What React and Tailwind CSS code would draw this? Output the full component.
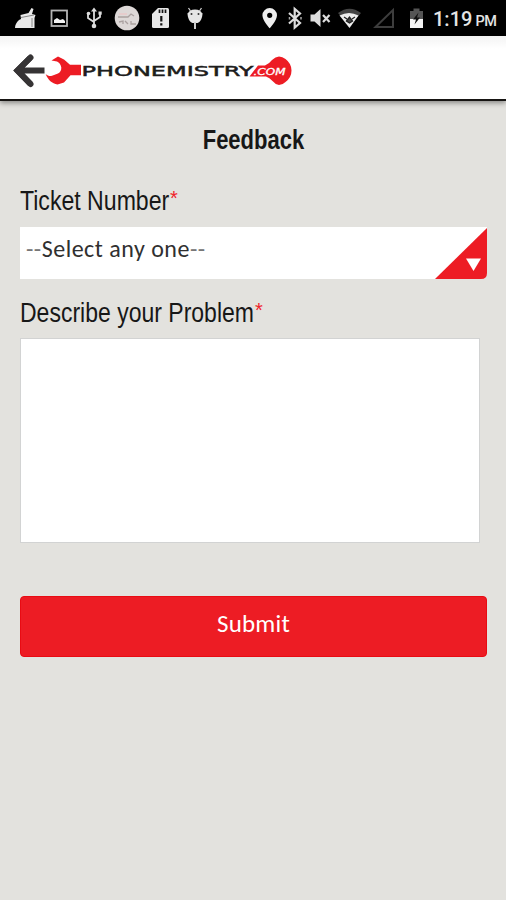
function StatusIcons() {
  return (
    <svg className="block h-[35px] w-[430px] shrink-0" viewBox="0 0 430 35">
      {/* cleaner */}
      <path d="M15 28c0-3 1.500-6 4-8l2-1-.5-4 8-2 3-5 2 1-1.500 5 3.500 1-1 3v10z" fill="#e9e9e9" />
      <path d="M21 17.500l13-2.500M32 18v9" stroke="#888" strokeWidth="1" />
      {/* picture */}
      <rect x="51.500" y="10.500" width="15.500" height="15.500" fill="none" stroke="#b5b5b5" strokeWidth="1.800" />
      <path d="M54 23v-3l3-2 3 2 3-1 2 2v2z" fill="#f2f2f2" />
      {/* usb */}
      <path d="M94 9v17M88 14v4l6 4M100 13v4l-6 4" fill="none" stroke="#ddd" strokeWidth="1.800" />
      <path d="M91 11.500l3-4 3 4z" fill="#ddd" />
      <circle cx="94" cy="26" r="2.300" fill="#ddd" />
      <circle cx="88.500" cy="13.500" r="1.800" fill="#ddd" />
      <rect x="98.500" y="11.500" width="3.200" height="3.200" fill="#ddd" />
      {/* avatar notification */}
      <circle cx="127" cy="18" r="12.300" fill="#ddd8d7" />
      <path d="M118 17h10l3-3 3 2M119 22l4-1v3M125 21l3 3M131 21v3h5" fill="none" stroke="#aaa1a0" strokeWidth="1.300" />
      <path d="M119 14h8" stroke="#e6cccc" strokeWidth="2" />
      {/* sd card */}
      <path d="M158 8h9.500q1.500 0 1.500 1.500v17q0 1.500-1.500 1.500h-14q-1.500 0-1.500-1.500V14z" fill="#e6e6e6" />
      <path d="M159.500 9.500v3.500M162.500 9.500v3.500M165.500 9.500v3.500" stroke="#111" strokeWidth="1.700" />
      <path d="M161.300 16v5.500M161.300 23.300v2.200" stroke="#111" strokeWidth="2.200" />
      {/* android debugging */}
      <path d="M187.500 13h15c0 5-2 9-5 10h-5c-3-1-5-5-5-10z" fill="#e6e6e6" />
      <ellipse cx="195" cy="14" rx="7" ry="4.500" fill="#e6e6e6" />
      <path d="M190.500 11l-2-3M199.500 11l2-3" stroke="#ccc" strokeWidth="1.300" />
      <path d="M195 22v7" stroke="#ccc" strokeWidth="2" />
      <circle cx="191.500" cy="14" r="1" fill="#333" />
      <circle cx="198.500" cy="14" r="1" fill="#333" />
      {/* location */}
      <path fillRule="evenodd" d="M269.700 8a7.300 7.300 0 0 0-7.300 7.300c0 5.200 7.300 13 7.300 13s7.300-7.800 7.300-13A7.300 7.300 0 0 0 269.700 8zm0 4.700a2.600 2.600 0 1 1 0 5.200 2.600 2.600 0 0 1 0-5.200z" fill="#eee" />
      {/* bluetooth */}
      <path d="M289 13l11 10-5.300 4.500V9l5.300 4.500-11 10" fill="none" stroke="#ddd" strokeWidth="2.200" />
      <path d="M289.500 17v2.500M301 17v2.500" stroke="#aaa" strokeWidth="1.500" />
      {/* muted */}
      <path d="M310.500 14.500h4l6-5.500v18l-6-5.500h-4z" fill="#ddd" />
      <path d="M323 15l6.500 7M329.500 15l-6.500 7" stroke="#ddd" strokeWidth="2.200" />
      {/* wifi */}
      <path d="M338 13q11.500-8.500 23 0l-3.500 4q-8-5-16 0z" fill="#444" />
      <path d="M339.500 15.500q9.500-5 19 0L349.500 28z" fill="#eee" />
      <path d="M344 17l3 2M355 17l-3 2M346.500 21l3-4 3 4-3 2z" stroke="#222" strokeWidth="1.300" fill="#444" />
      {/* mobile signal */}
      <path d="M375.500 27L393 10v17z" fill="none" stroke="#3d3d3d" strokeWidth="2" />
      {/* battery */}
      <path d="M410 28V11h3.500V8.500h6V11h3.500v17z" fill="#555" />
      <path d="M410 19h13v9h-13z" fill="#f4f4f4" />
      <path d="M418.500 12.500l-5.500 7h3l-1.500 5 5.500-7h-3z" fill="#111" />
    </svg>
  );
}

function Logo() {
  return (
    <svg className="block h-[38px] w-[290px]" viewBox="8 51 290 38">
      <path d="M30.500 57.500L17.500 70.500l13 13.500M18 70.500h26.500" fill="none" stroke="#363435" strokeWidth="6" />
      <path d="M30.500 57.500L17.500 70.500l13 13.500" fill="none" stroke="#363435" strokeWidth="6" strokeLinecap="round" />
      <path d="M51.500 60.500L58 56.500 64 59.500 70 64.700h11V75.300H70.500L64 82.500 57.500 84.500C52 83.500 48 80 45.700 74 48 76 50 76.500 52 75.700L58 73.500Q61.500 71.500 61.300 67.500 60.500 63 57 61.500z" fill="#ed1c24" />
      <text x="81.500" y="76" fontFamily="'DejaVu Sans', sans-serif" fontSize="14.800" fill="#1d1d1d" stroke="#1d1d1d" strokeWidth=".5" textLength="172" lengthAdjust="spacingAndGlyphs">PHONEMISTRY</text>
      <path d="M249.500 76.500l8.500-11h7q4-1.500 7-5.500 3.500-3.500 7-3.500t6.500 2.500q6 4.500 6 11.500t-6 11.500q-3 3-6.500 3-3.500-.3-6.500-4-3-3.500-6.500-4.500z" fill="#ed1c24" />
      <text x="253.500" y="75" fontFamily="'DejaVu Sans', sans-serif" fontSize="9.500" fontStyle="oblique" fill="#fff" stroke="#fff" strokeWidth=".3" textLength="32" lengthAdjust="spacingAndGlyphs">.COM</text>
    </svg>
  );
}

export default function App() {
  return (
    <div className="flex h-[900px] w-[506px] flex-col overflow-hidden bg-[#e3e2de] font-['Liberation_Sans',Arial,sans-serif] text-[#171717]">
      <div className="flex h-9 shrink-0 bg-black text-[#e4e4e4]">
        <StatusIcons />
        <div className="flex items-baseline gap-[3px] whitespace-nowrap pl-[3px] pt-[6px] font-[Roboto,sans-serif] font-medium leading-[26px]">
          <span className="text-[20px]">1:19</span>
          <span className="text-[14.500px] tracking-[-0.500px]">PM</span>
        </div>
      </div>
      <header className="h-[65px] shrink-0 border-b-2 border-[#171513] bg-gradient-to-b from-[#f3f3f3] to-white to-20% pl-2 pt-[15px] shadow-[0_2px_5px_rgba(0,0,0,0.4)]">
        <Logo />
      </header>
      <main className="flex flex-col pl-5 pr-[19px]">
        <h1 className="mt-[23px] h-8 text-center text-[27.500px] font-bold leading-8">
          <span className="inline-block scale-x-[0.8]">Feedback</span>
        </h1>
        <label className="mt-[29px] flex h-8 whitespace-nowrap text-[27px] leading-8">
          <span className="w-[150px]"><span className="inline-block origin-left scale-x-[0.855]">Ticket Number</span></span>
          <span className="text-[20px] leading-[26px] text-[#f0222b]">*</span>
        </label>
        <div className="mt-[10px] flex h-[52px] justify-between bg-white">
          <span className="whitespace-nowrap pl-[6px] font-[Carlito,Lato,sans-serif] text-[24px] leading-[43px] tracking-[0.500px] text-[#303030]"><span className="text-[#777]">--</span>Select any one<span className="text-[#777]">--</span></span>
          <svg className="h-[52px] w-[53px]" viewBox="0 0 53 52">
            <path d="M47 52h6v-6z" fill="#e3e2de" />
            <path d="M1 52L53 1v45q0 6-6 6z" fill="#ed1c24" />
            <path d="M32 31.500h15L39.500 44z" fill="#fff" />
          </svg>
        </div>
        <label className="mt-[18px] flex h-8 whitespace-nowrap text-[27px] leading-8">
          <span className="w-[235px]"><span className="inline-block origin-left scale-x-[0.852]">Describe your Problem</span></span>
          <span className="text-[20px] leading-[26px] text-[#f0222b]">*</span>
        </label>
        <div className="mt-[9px] h-[205px] w-[460px] border border-[#d2d3d3] bg-white" />
        <button className="mt-[53px] h-[61px] rounded-[4px] border border-[#e90b13] bg-[#ed1c24] pb-1 font-[Carlito,Lato,sans-serif] text-[25px] leading-[53px] tracking-[0.200px] text-white"><span className="relative -top-px">Submit</span></button>
      </main>
    </div>
  );
}
